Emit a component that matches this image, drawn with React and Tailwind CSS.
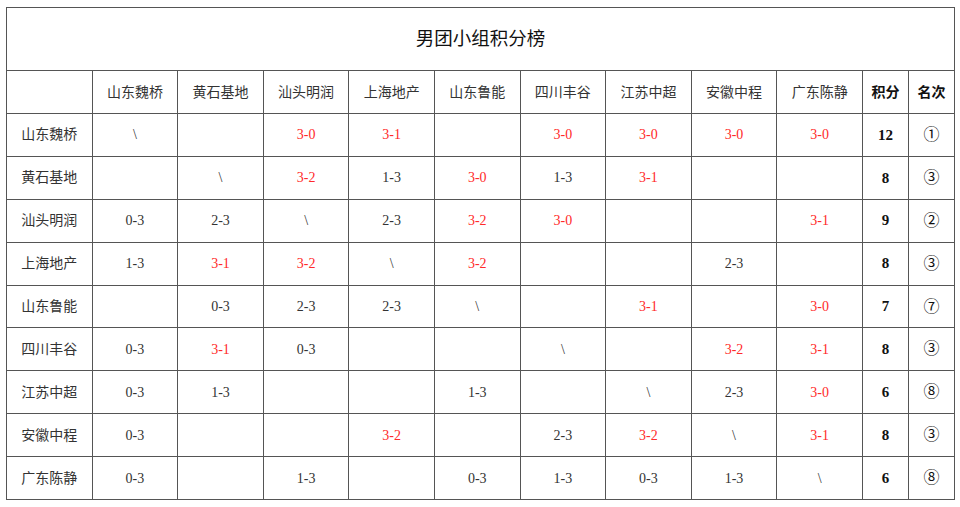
import React from "react";

const teams = ["山东魏桥", "黄石基地", "汕头明润", "上海地产", "山东鲁能", "四川丰谷", "江苏中超", "安徽中程", "广东陈静"];

const rows = [
  ["\\", "", "3-0r", "3-1r", "", "3-0r", "3-0r", "3-0r", "3-0r", "12", "①"],
  ["", "\\", "3-2r", "1-3", "3-0r", "1-3", "3-1r", "", "", "8", "③"],
  ["0-3", "2-3", "\\", "2-3", "3-2r", "3-0r", "", "", "3-1r", "9", "②"],
  ["1-3", "3-1r", "3-2r", "\\", "3-2r", "", "", "2-3", "", "8", "③"],
  ["", "0-3", "2-3", "2-3", "\\", "", "3-1r", "", "3-0r", "7", "⑦"],
  ["0-3", "3-1r", "0-3", "", "", "\\", "", "3-2r", "3-1r", "8", "③"],
  ["0-3", "1-3", "", "", "1-3", "", "\\", "2-3", "3-0r", "6", "⑧"],
  ["0-3", "", "", "3-2r", "", "2-3", "3-2r", "\\", "3-1r", "8", "③"],
  ["0-3", "", "1-3", "", "0-3", "1-3", "0-3", "1-3", "\\", "6", "⑧"],
];

const font = { fontFamily: '"Liberation Serif", "Noto Sans CJK SC", serif' };

export default function App() {
  return (
    <div className="bg-white w-[960px] h-[507px] pt-[7px] pl-[6px]" style={font}>
      <table className="table-fixed border-collapse text-[14px] text-[#333]" style={{ width: 949 }}>
        <colgroup>
          {Array.from({ length: 10 }).map((_, i) => (
            <col key={i} className="w-[85.6px]" />
          ))}
          <col className="w-[46px]" />
          <col className="w-[46px]" />
        </colgroup>
        <tbody>
          <tr className="h-[63px]">
            <td colSpan={12} className="border border-[#555] text-center text-[18.5px] text-[#111] pt-[2px]">
              男团小组积分榜
            </td>
          </tr>
          <tr className="h-[43px]">
            <td className="border border-[#555]"></td>
            {teams.map((t) => (
              <td key={t} className="border border-[#555] text-center">{t}</td>
            ))}
            <td className="border border-[#555] text-center font-bold text-[#111]">积分</td>
            <td className="border border-[#555] text-center font-bold text-[#111]">名次</td>
          </tr>
          {rows.map((r, i) => (
            <tr key={i} className="h-[42.9px]">
              <td className="border border-[#555] text-center">{teams[i]}</td>
              {r.map((c, j) => {
                const red = c.endsWith("r");
                const txt = red ? c.slice(0, -1) : c;
                let cls = "border border-[#555] text-center";
                if (j === 9) cls += " font-bold text-[#111] text-[15px]";
                else if (j === 10) cls += " text-[#111] text-[16px]";
                else if (red) cls += " text-[#ff2a2a]";
                return (
                  <td key={j} className={cls}>{txt}</td>
                );
              })}
            </tr>
          ))}
        </tbody>
      </table>
    </div>
  );
}
